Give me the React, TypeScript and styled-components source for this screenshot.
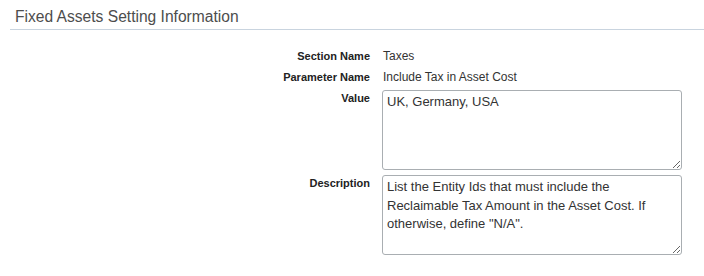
import React from "react";
import styled, { createGlobalStyle } from "styled-components";

const GlobalStyle = createGlobalStyle`
    html, body {
        margin: 0;
        padding: 0;
        background: #fff;
        font-family: "Liberation Sans", Arial, sans-serif;
    }
`;

const Page = styled.div`
    padding-left: 10px;
`;

const Header = styled.div`
    height: 30px;
    box-sizing: border-box;
    border-bottom: 1px solid #c9d4df;
    padding: 7px 0 0 5px;
    font-size: 15.6px;
    line-height: 20px;
    color: #4d4d4d;
`;

const Fields = styled.div`
    display: grid;
    grid-template-columns: 360px 300px;
    column-gap: 13px;
    row-gap: 5px;
    padding-top: 18px;
`;

const Label = styled.div`
    text-align: right;
    font-size: 11px;
    font-weight: bold;
    line-height: 16px;
    color: #222;
`;

const Value = styled.div`
    font-size: 12px;
    line-height: 16px;
    color: #333;
`;

const TextBox = styled.textarea`
    display: block;
    box-sizing: border-box;
    width: 300px;
    height: 80px;
    margin: 0 0 0 -1px;
    padding: 2px 4px;
    border: 1px solid #a9aeb2;
    border-radius: 3px;
    font-family: "Liberation Sans", Arial, sans-serif;
    font-size: 13px;
    line-height: 18.5px;
    color: #333;
    background: #fff;
    outline: none;
`;

const rows = [
    { label: "Section Name", value: "Taxes" },
    { label: "Parameter Name", value: "Include Tax in Asset Cost" },
];

const boxes = [
    { label: "Value", value: "UK, Germany, USA" },
    {
        label: "Description",
        value: 'List the Entity Ids that must include the Reclaimable Tax Amount in the Asset Cost. If otherwise, define "N/A".',
    },
];

export default function App() {
    return (
        <Page>
            <GlobalStyle />
            <Header>Fixed Assets Setting Information</Header>
            <Fields>
                {rows.map((r) => (
                    <React.Fragment key={r.label}>
                        <Label>{r.label}</Label>
                        <Value>{r.value}</Value>
                    </React.Fragment>
                ))}
                {boxes.map((b) => (
                    <React.Fragment key={b.label}>
                        <Label>{b.label}</Label>
                        <TextBox defaultValue={b.value} />
                    </React.Fragment>
                ))}
            </Fields>
        </Page>
    );
}
